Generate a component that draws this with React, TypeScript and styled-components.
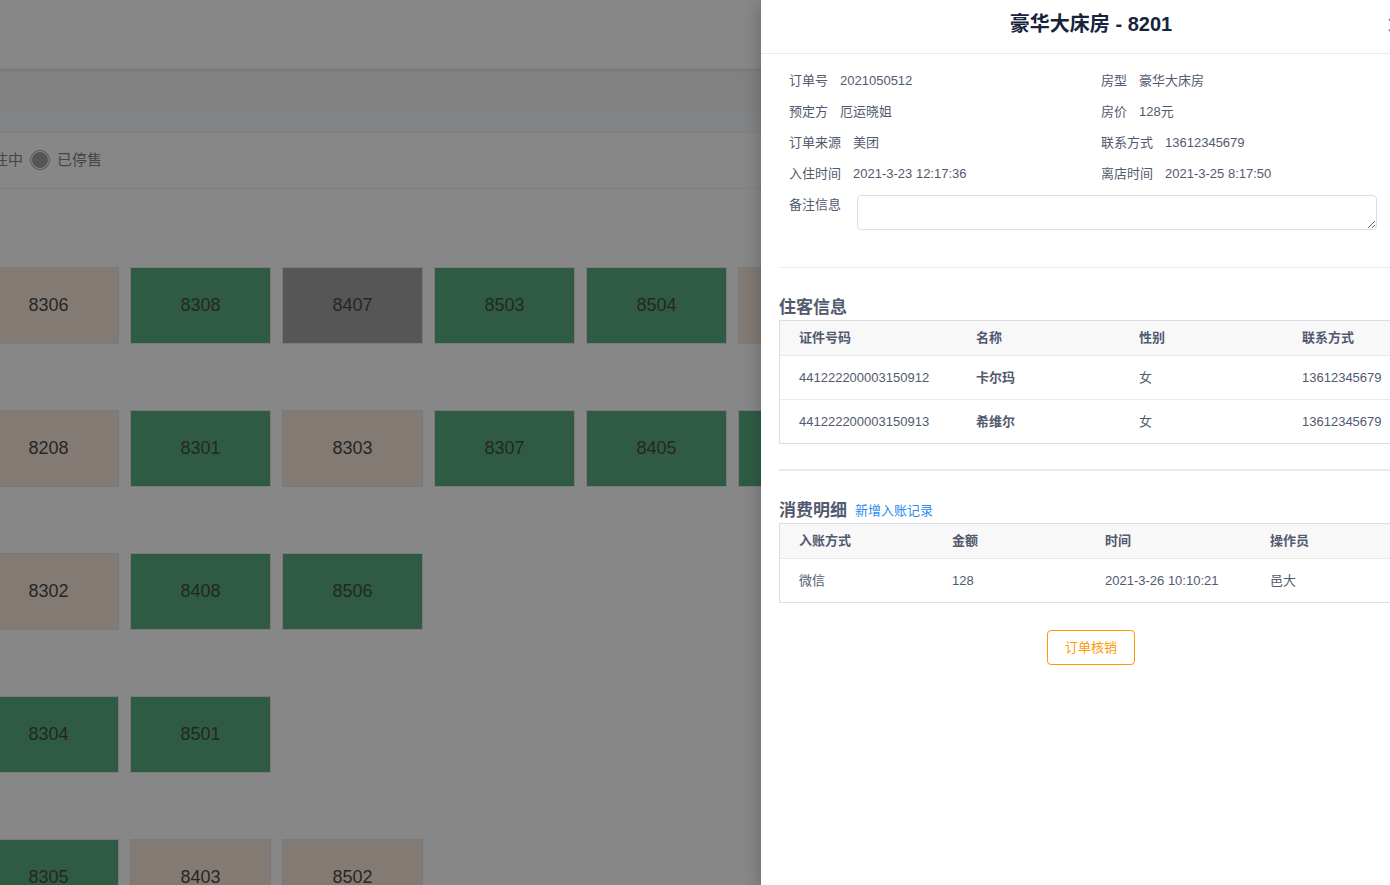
import React from "react";
import styled, { createGlobalStyle } from "styled-components";

const GlobalStyle = createGlobalStyle`
  *, *::before, *::after { box-sizing: border-box; }
  body {
    margin: 0;
    background: #f3f6fa;
    color: #515a6e;
    font-family: "Liberation Sans", "Noto Sans CJK SC", sans-serif;
    font-size: 13px;
  }
  button, input, textarea { font: inherit; }
`;

const Page = styled.div`
  position: relative;
  height: 100vh;
  overflow: hidden;
`;

const TopBar = styled.header`
  position: relative;
  height: 69px;
  background: #ffffff;
  border-bottom: 1px solid #f1f1f1;
  box-shadow: 0 1px 4px rgba(0, 0, 0, 0.12);
`;

const TabStrip = styled.nav`
  height: 42px;
  background: #f0f0f0;
  border-bottom: 1px solid #ececee;
`;

const Board = styled.main`
  margin-top: 21px;
  margin-left: -50px;
  background: #ffffff;
  border: 1px solid #e8eaec;
`;

const Legend = styled.div`
  display: flex;
  align-items: center;
  gap: 7px;
  height: 56px;
  padding-bottom: 2px;
  border-bottom: 1px solid #e8eaec;
`;

const LegendItem = styled.label`
  display: flex;
  align-items: center;
  gap: 7px;
  font-size: 15px;
  line-height: 20px;
`;

const LegendRadio = styled.input<{ $color: string }>`
  appearance: none;
  width: 20px;
  height: 20px;
  margin: 0;
  padding: 1px;
  border: 1px solid #7c7c7c;
  border-radius: 50%;
  background: ${(p) => p.$color} content-box;
`;

const Floors = styled.div`
  display: flex;
  flex-direction: column;
  gap: 66px;
  padding: 78px 0 66px 27px;
`;

const Floor = styled.div`
  display: grid;
  grid-auto-flow: column;
  grid-auto-columns: 141px;
  justify-content: start;
  gap: 11px;
`;

type Status = "free" | "busy" | "closed";

const statusColors: Record<Status, string> = {
  free: "#239257",
  busy: "#f2decd",
  closed: "#848484",
};

const Room = styled.button<{ $status: Status }>`
  height: 77px;
  padding: 0;
  border: 1px solid #dcdee2;
  background: ${(p) => statusColors[p.$status]};
  color: #0a0a0a;
  font-size: 18px;
`;

const Mask = styled.div`
  position: absolute;
  inset: 0;
  background: rgba(55, 55, 55, 0.6);
`;

const Drawer = styled.aside`
  position: absolute;
  top: 0;
  right: -31px;
  bottom: 0;
  width: 660px;
  background: #ffffff;
  box-shadow: 0 4px 16px rgba(0, 0, 0, 0.25);
`;

const DrawerHeader = styled.div`
  height: 54px;
  border-bottom: 1px solid #e8eaec;
  text-align: center;
`;

const DrawerTitle = styled.h1`
  margin: 0;
  color: #17233d;
  font-size: 20px;
  line-height: 49px;
`;

const CloseButton = styled.button`
  position: absolute;
  top: 10px;
  right: 8px;
  display: flex;
  padding: 0;
  border: 0;
  background: none;
  color: #999999;
`;

const DrawerBody = styled.div`
  padding: 11px 18px;
`;

const Details = styled.dl`
  display: grid;
  grid-template-columns: 1fr 1fr;
  margin: 0;
`;

const Detail = styled.div`
  display: flex;
  gap: 12px;
  padding-left: 10px;
  line-height: 31px;
`;

const DetailValue = styled.dd`
  margin: 0;
`;

const Remark = styled.div`
  display: flex;
  align-items: flex-start;
  gap: 16px;
  padding: 0 26px 0 10px;
  line-height: 31px;
`;

const RemarkInput = styled.textarea`
  flex: 1;
  height: 35px;
  margin: 6px 0 0;
  padding: 4px 7px;
  border: 1px solid #dcdee2;
  border-radius: 4px;
  line-height: 20px;
  resize: vertical;
`;

const Divider = styled.hr<{ $size: number; $top: number }>`
  height: ${(p) => p.$size}px;
  margin: ${(p) => p.$top}px 0 27px;
  border: 0;
  background: #e8eaec;
`;

const SectionHead = styled.div`
  display: flex;
  align-items: center;
  gap: 8px;
  height: 25px;
`;

const SectionTitle = styled.h2`
  margin: 0;
  font-size: 17px;
  line-height: 25px;
`;

const AddLink = styled.a`
  color: #2d8cf0;
  line-height: 25px;
  text-decoration: none;
`;

const Table = styled.table`
  width: 100%;
  border: 1px solid #dcdee2;
  border-spacing: 0;
  table-layout: fixed;
  text-align: left;

  th, td {
    padding: 0 0 0 19px;
    line-height: 20px;
    white-space: nowrap;
  }
  thead th {
    height: 35px;
    background: #f8f8f9;
    border-bottom: 1px solid #e8eaec;
  }
  tbody tr > * {
    height: 44px;
    border-bottom: 1px solid #e8eaec;
  }
  tbody tr:last-child > * {
    height: 43px;
    border-bottom: 0;
  }
`;

const HeadCell = styled.th<{ $width?: number }>`
  width: ${(p) => (p.$width ? `${p.$width}px` : "auto")};
`;

const Actions = styled.div`
  display: flex;
  justify-content: center;
  margin-top: 27px;
`;

const VerifyButton = styled.button`
  height: 35px;
  padding: 0 17px 2px;
  border: 1px solid #ff9900;
  border-radius: 4px;
  background: #ffffff;
  color: #ff9900;
`;

type RoomInfo = { no?: string; status: Status };

const floors: RoomInfo[][] = [
  [
    { no: "8306", status: "busy" },
    { no: "8308", status: "free" },
    { no: "8407", status: "closed" },
    { no: "8503", status: "free" },
    { no: "8504", status: "free" },
    { status: "busy" },
  ],
  [
    { no: "8208", status: "busy" },
    { no: "8301", status: "free" },
    { no: "8303", status: "busy" },
    { no: "8307", status: "free" },
    { no: "8405", status: "free" },
    { status: "free" },
  ],
  [
    { no: "8302", status: "busy" },
    { no: "8408", status: "free" },
    { no: "8506", status: "free" },
  ],
  [
    { no: "8304", status: "free" },
    { no: "8501", status: "free" },
  ],
  [
    { no: "8305", status: "free" },
    { no: "8403", status: "busy" },
    { no: "8502", status: "busy" },
  ],
];

const details: [string, string][] = [
  ["订单号", "2021050512"],
  ["房型", "豪华大床房"],
  ["预定方", "厄运晓姐"],
  ["房价", "128元"],
  ["订单来源", "美团"],
  ["联系方式", "13612345679"],
  ["入住时间", "2021-3-23 12:17:36"],
  ["离店时间", "2021-3-25 8:17:50"],
];

const guests = [
  { id: "441222200003150912", name: "卡尔玛", sex: "女", phone: "13612345679" },
  { id: "441222200003150913", name: "希维尔", sex: "女", phone: "13612345679" },
];

const payments = [
  { method: "微信", amount: "128", time: "2021-3-26 10:10:21", operator: "邑大" },
];

export default function App() {
  return (
    <Page>
      <GlobalStyle />
      <TopBar />
      <TabStrip />
      <Board>
        <Legend>
          <LegendItem>
            <LegendRadio type="radio" name="status" $color={statusColors.busy} />
            入住中
          </LegendItem>
          <LegendItem>
            <LegendRadio type="radio" name="status" $color={statusColors.closed} />
            已停售
          </LegendItem>
        </Legend>
        <Floors>
          {floors.map((rooms, i) => (
            <Floor key={i}>
              {rooms.map((room, j) => (
                <Room key={j} type="button" $status={room.status}>
                  {room.no}
                </Room>
              ))}
            </Floor>
          ))}
        </Floors>
      </Board>
      <Mask />
      <Drawer>
        <DrawerHeader>
          <DrawerTitle>豪华大床房 - 8201</DrawerTitle>
          <CloseButton type="button" aria-label="关闭">
            <svg width="31" height="31" viewBox="0 0 31 31" fill="none" stroke="currentColor" strokeWidth="2" strokeLinecap="round">
              <path d="M7.500 9.500 18.500 20.500M18.500 9.500 7.500 20.500" />
            </svg>
          </CloseButton>
        </DrawerHeader>
        <DrawerBody>
          <Details>
            {details.map(([label, value]) => (
              <Detail key={label}>
                <dt>{label}</dt>
                <DetailValue>{value}</DetailValue>
              </Detail>
            ))}
          </Details>
          <Remark>
            <label htmlFor="remark">备注信息</label>
            <RemarkInput id="remark" />
          </Remark>
          <Divider $size={1} $top={37} />
          <SectionHead>
            <SectionTitle>住客信息</SectionTitle>
          </SectionHead>
          <Table>
            <thead>
              <tr>
                <HeadCell $width={177}>证件号码</HeadCell>
                <HeadCell $width={163}>名称</HeadCell>
                <HeadCell $width={163}>性别</HeadCell>
                <HeadCell>联系方式</HeadCell>
              </tr>
            </thead>
            <tbody>
              {guests.map((guest) => (
                <tr key={guest.id}>
                  <td>{guest.id}</td>
                  <th scope="row">{guest.name}</th>
                  <td>{guest.sex}</td>
                  <td>{guest.phone}</td>
                </tr>
              ))}
            </tbody>
          </Table>
          <Divider $size={2} $top={25} />
          <SectionHead>
            <SectionTitle>消费明细</SectionTitle>
            <AddLink href="#add">新增入账记录</AddLink>
          </SectionHead>
          <Table>
            <thead>
              <tr>
                <HeadCell $width={153}>入账方式</HeadCell>
                <HeadCell $width={153}>金额</HeadCell>
                <HeadCell $width={165}>时间</HeadCell>
                <HeadCell>操作员</HeadCell>
              </tr>
            </thead>
            <tbody>
              {payments.map((payment) => (
                <tr key={payment.time}>
                  <td>{payment.method}</td>
                  <td>{payment.amount}</td>
                  <td>{payment.time}</td>
                  <td>{payment.operator}</td>
                </tr>
              ))}
            </tbody>
          </Table>
          <Actions>
            <VerifyButton type="button">订单核销</VerifyButton>
          </Actions>
        </DrawerBody>
      </Drawer>
    </Page>
  );
}
